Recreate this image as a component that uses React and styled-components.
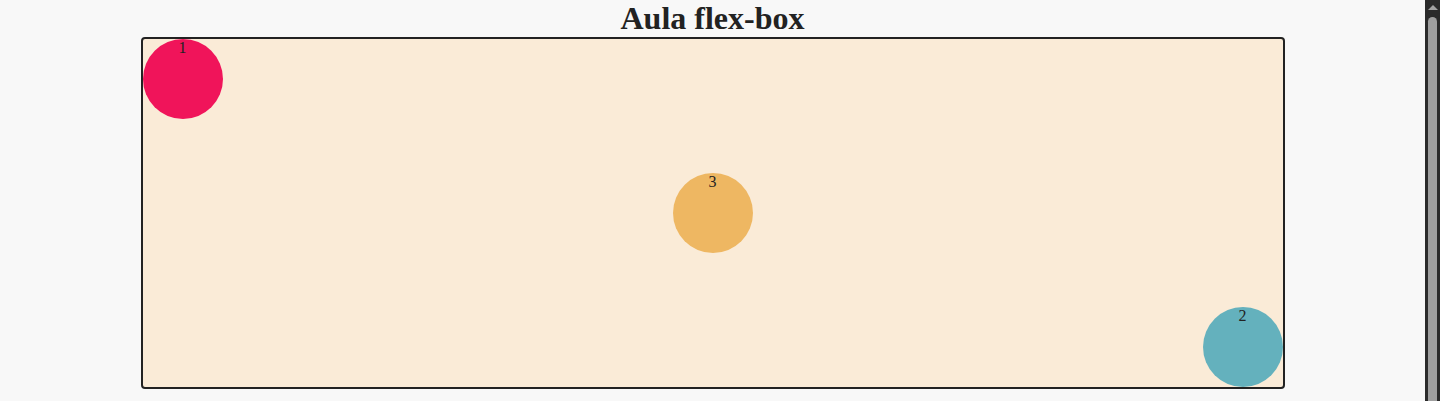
import styled, { createGlobalStyle } from "styled-components";

const GlobalStyle = createGlobalStyle`
body {
  margin: 0;
  background: #f8f8f8;
  color: #222;
  font-family: "Liberation Serif", "Times New Roman", serif;
}
`;

const Page = styled.div`
  margin-right: 15px;
  padding-bottom: 20px;
`;

const Title = styled.h1`
  margin: 0;
  text-align: center;
  font-size: 32px;
  line-height: normal;
`;

const Box = styled.div`
  width: 80%;
  height: 348px;
  margin: 0 auto;
  border: 2px solid #222;
  border-radius: 4px;
  background: #faebd7;
  display: flex;
  justify-content: space-between;
`;

const Ball = styled.div`
  width: 80px;
  height: 80px;
  border-radius: 50%;
  background: ${(p) => p.$color};
  order: ${(p) => p.$order};
  align-self: ${(p) => p.$align};
  text-align: center;
  font-size: 16px;
`;

/* fake window scrollbar, sits over the right edge */
const ScrollTrack = styled.div`
  position: fixed;
  top: 0;
  right: 0;
  bottom: 0;
  width: 15px;
  background: #2b2b2b;
  display: flex;
  flex-direction: column;
  align-items: center;
`;

const ScrollArrow = styled.div`
  margin-top: 5px;
  width: 0;
  height: 0;
  border-left: 5px solid transparent;
  border-right: 5px solid transparent;
  border-bottom: 5px solid #a3a3a3;
`;

const ScrollThumb = styled.div`
  margin-top: 7px;
  flex: 1;
  width: 9px;
  background: #9f9f9f;
  border-radius: 5px 5px 0 0;
`;

export default function App() {
  return (
    <>
      <GlobalStyle />
      <Page>
        <Title>Aula flex-box</Title>
        <Box>
          <Ball $color="#f0145a" $order={1} $align="flex-start">1</Ball>
          <Ball $color="#64b1bd" $order={3} $align="flex-end">2</Ball>
          <Ball $color="#eeb762" $order={2} $align="center">3</Ball>
        </Box>
      </Page>
      <ScrollTrack>
        <ScrollArrow />
        <ScrollThumb />
      </ScrollTrack>
    </>
  );
}
